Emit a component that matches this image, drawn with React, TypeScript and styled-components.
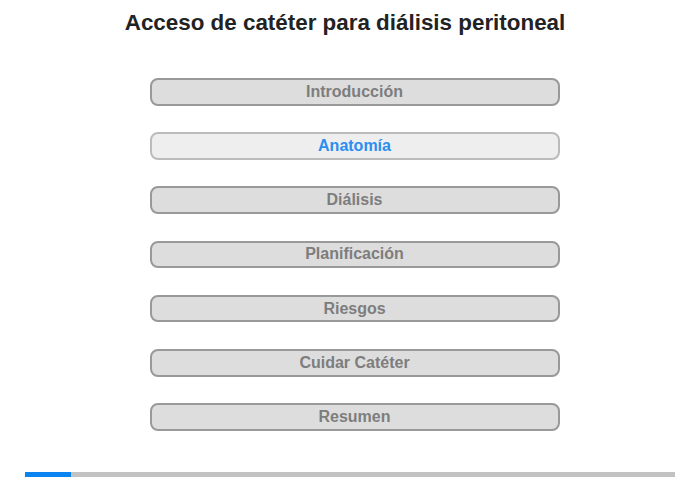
import React from "react";
import styled, { createGlobalStyle } from "styled-components";

const GlobalStyle = createGlobalStyle`
  body {
    margin: 0;
    background: #ffffff;
    font-family: "Liberation Sans", Arial, sans-serif;
  }
`;

const sections = [
  "Introducción",
  "Anatomía",
  "Diálisis",
  "Planificación",
  "Riesgos",
  "Cuidar Catéter",
  "Resumen",
];

const App = () => {
  const active = 1;
  const progress = (46 / 650) * 100;
  return (
    <>
      <GlobalStyle />
      <Page>
        <Title>Acceso de catéter para diálisis peritoneal</Title>
        <Menu>
          {sections.map((s, i) => (
            <MenuButton key={s} $active={i === active}>
              {s}
            </MenuButton>
          ))}
        </Menu>
        <ProgressTrack>
          <ProgressFill style={{ width: `${progress}%` }} />
        </ProgressTrack>
      </Page>
    </>
  );
};
export default App;

const Page = styled.div`
  width: 700px;
  height: 480px;
  display: flex;
  flex-direction: column;
  align-items: center;
  box-sizing: border-box;
  padding-top: 10px;
`;

const Title = styled.h1`
  margin: 0 0 0 -10px;
  font-size: 22.4px;
  line-height: 26px;
  font-weight: 700;
  color: #222222;
`;

const Menu = styled.div`
  display: flex;
  flex-direction: column;
  gap: 26.6px;
  margin: 42px 0 0 9px;
`;

const MenuButton = styled.div<{ $active: boolean }>`
  width: 410px;
  height: 27.6px;
  box-sizing: border-box;
  border: 2px solid ${(p) => (p.$active ? "#bbbbbb" : "#999999")};
  border-radius: 8px;
  background: ${(p) => (p.$active ? "#eeeeee" : "#dddddd")};
  color: ${(p) => (p.$active ? "#2a8ff0" : "#7d7d7d")};
  font-size: 16px;
  font-weight: 700;
  display: flex;
  align-items: center;
  justify-content: center;
`;

const ProgressTrack = styled.div`
  width: 650px;
  height: 5px;
  margin-top: 41px;
  background: #c2c2c2;
`;

const ProgressFill = styled.div`
  height: 100%;
  background: #0a84f0;
`;
